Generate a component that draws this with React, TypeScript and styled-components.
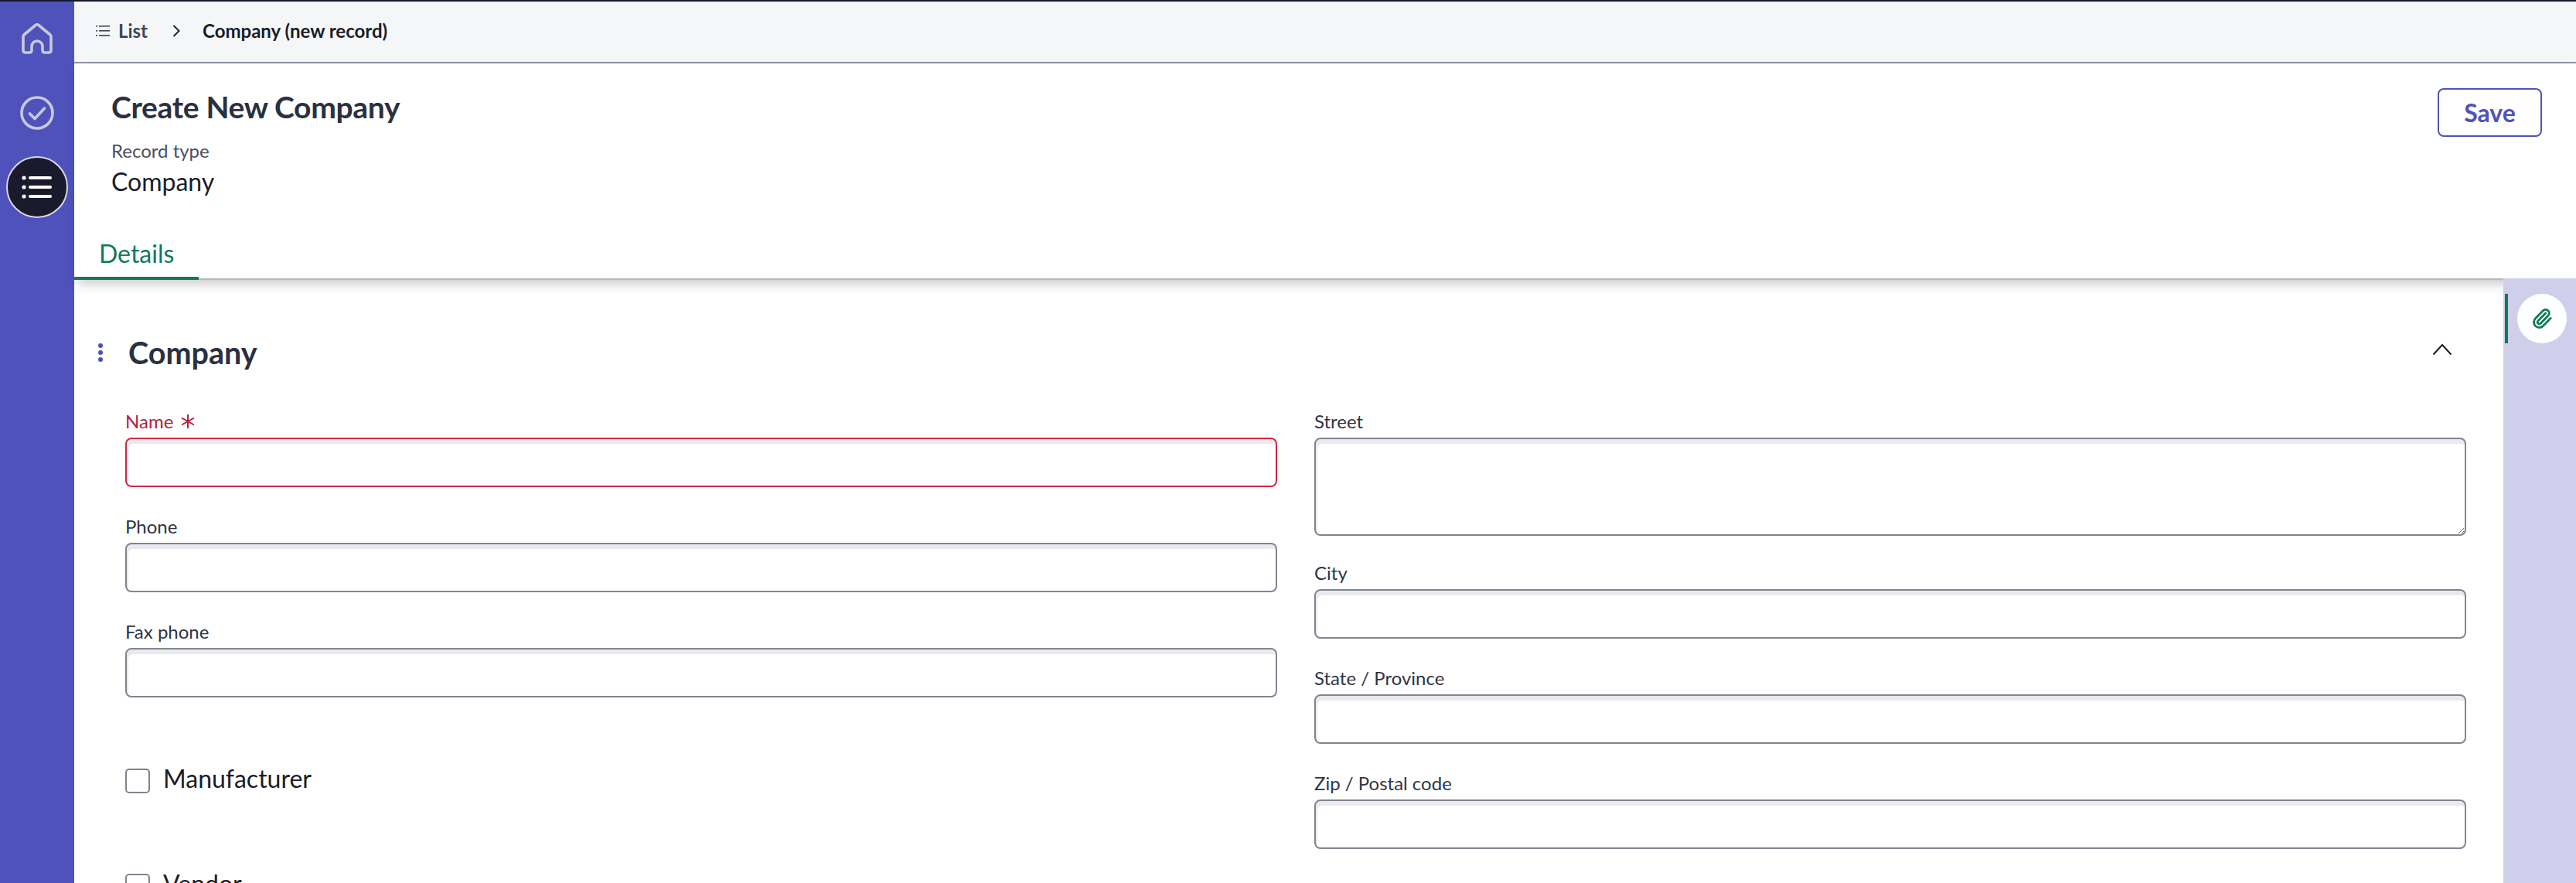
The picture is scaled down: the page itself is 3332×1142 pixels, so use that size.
import { createGlobalStyle, styled } from 'styled-components'

const GlobalStyle = createGlobalStyle`
  html, body {
    margin: 0;
    height: 100%;
    background: #fff;
  }
  body {
    font-family: Lato, "Open Sans", sans-serif;
    color: #2b3040;
    overflow: hidden;
  }
  * {
    box-sizing: border-box;
  }
`

const Page = styled.div`
  width: 3332px;
  height: 1142px;
  display: flex;
  flex-direction: column;
  overflow: hidden;
`
const TopEdge = styled.div`
  height: 2px;
  flex: none;
  background: #17172b;
`
const Shell = styled.div`
  flex: 1;
  min-height: 0;
  display: flex;
`
const Sidebar = styled.nav`
  width: 96px;
  flex: none;
  display: flex;
  flex-direction: column;
  align-items: center;
  gap: 16px;
  padding-top: 8px;
  background: #4f52bb;
`
const NavItem = styled.div<{ $active?: boolean }>`
  width: 80px;
  height: 80px;
  display: flex;
  align-items: center;
  justify-content: center;
  border-radius: 50%;
  color: #c6c9de;
  ${({ $active }) => ($active ? 'background: #1a1a2c; border: 2px solid #d6d7e9; color: #fff;' : '')}
`
const Main = styled.div`
  flex: 1;
  min-width: 0;
  display: flex;
  flex-direction: column;
`
const Breadcrumbs = styled.div`
  height: 80px;
  flex: none;
  display: flex;
  align-items: center;
  padding: 0 0 3px 28px;
  background: #f5f6f8;
  border-bottom: 2px solid #8e92a0;
  font-size: 24px;
  font-weight: 700;
`
const CrumbLink = styled.div`
  display: flex;
  align-items: center;
  gap: 11px;
  color: #3f4557;
`
const CrumbSep = styled.div`
  display: flex;
  margin: 0 29px 0 32px;
  color: #20242f;
`
const CrumbCurrent = styled.div`
  color: #1a1d27;
`
const Header = styled.header`
  position: relative;
  z-index: 1;
  flex: none;
  background: #fff;
  box-shadow: 0 8px 14px -4px rgba(40, 42, 50, 0.28);
`
const HeaderTop = styled.div`
  height: 228px;
  display: flex;
  justify-content: space-between;
  padding: 32px 44px 0 48px;
`
const Title = styled.h1`
  margin: 0;
  font-size: 39px;
  line-height: 48px;
  letter-spacing: -0.33px;
  font-weight: 700;
  color: #2b3040;
`
const MetaLabel = styled.div`
  margin-top: 17px;
  font-size: 24px;
  line-height: 32px;
  color: #4b5060;
`
const MetaValue = styled.div`
  margin-top: 4px;
  font-size: 32px;
  line-height: 40px;
  color: #1a1d27;
`
const SaveButton = styled.button`
  width: 135px;
  height: 63px;
  margin-top: 0;
  background: #fff;
  border: 2px solid #4f52bb;
  border-radius: 8px;
  color: #4f52bb;
  font-family: inherit;
  font-size: 32px;
  font-weight: 700;
`
const TabBar = styled.div`
  height: 52px;
  margin-right: 94px;
  display: flex;
  border-bottom: 2px solid #b6b8bd;
`
const Tab = styled.div`
  width: 161px;
  height: 52px;
  padding: 0 0 0 32px;
  border-bottom: 4px solid #10795a;
  font-size: 32px;
  line-height: 36px;
  color: #10795a;
`
const Body = styled.div`
  flex: 1;
  min-height: 0;
  display: flex;
`
const Content = styled.main`
  flex: 1;
  min-width: 0;
  overflow: hidden;
`
const SectionHead = styled.div`
  display: flex;
  align-items: center;
  height: 48px;
  margin-top: 70px;
  padding: 0 66px 0 0;
`
const DragDots = styled.div`
  flex: none;
  display: flex;
  align-items: center;
  justify-content: center;
  width: 68px;
  height: 48px;
  margin-right: 2px;
  color: #4f52bb;
`
const SectionTitle = styled.h2`
  flex: 1;
  margin: 0;
  font-size: 39.5px;
  line-height: 48px;
  font-weight: 700;
  color: #2b3040;
`
const Chevron = styled.div`
  display: flex;
  color: #1a1d27;
  margin-top: -8px;
`
const FormGrid = styled.div`
  display: grid;
  grid-template-columns: 1490px 1490px;
  gap: 48px;
  margin-top: 49px;
  padding: 0 48px 0 66px;
`
const Column = styled.div`
  display: flex;
  flex-direction: column;
  gap: 35px;
`
const Field = styled.label`
  display: flex;
  flex-direction: column;
`
const FieldLabel = styled.span<{ $error?: boolean }>`
  display: flex;
  align-items: center;
  gap: 9px;
  height: 32px;
  margin-bottom: 5px;
  font-size: 24px;
  line-height: 32px;
  color: ${({ $error }) => ($error ? '#b5203a' : '#2f3443')};
`
const TextInput = styled.input<{ $error?: boolean }>`
  display: block;
  width: 100%;
  height: 64px;
  padding: 0 14px;
  background: #fff;
  border: 2px solid ${({ $error }) => ($error ? '#cf2a41' : '#80848f')};
  border-radius: 8px;
  box-shadow: inset 2px 6px 0 #e9eaed;
  outline: none;
`
const TextArea = styled.textarea`
  display: block;
  width: 100%;
  height: 127px;
  margin-bottom: -3px;
  padding: 8px 14px;
  background: #fff;
  border: 2px solid #80848f;
  border-radius: 8px;
  box-shadow: inset 2px 6px 0 #e9eaed;
  outline: none;
`
const CheckRow = styled.label<{ $first?: boolean }>`
  display: flex;
  align-items: center;
  gap: 17px;
  height: 32px;
  margin-top: ${({ $first }) => ($first ? '57px' : '69px')};
  font-size: 32px;
  line-height: 32px;
  color: #1a1d27;
`
const CheckBox = styled.span`
  flex: none;
  width: 32px;
  height: 32px;
  background: #fff;
  border: 2px solid #80848f;
  border-radius: 5px;
`
const CheckText = styled.span`
  margin-bottom: 6px;
`
const Rail = styled.aside`
  position: relative;
  z-index: 2;
  width: 94px;
  flex: none;
  margin-top: -2px;
  padding: 20px 0 0 2px;
  display: flex;
  gap: 12px;
  align-items: flex-start;
  background: #cfcfeb;
`
const RailMarker = styled.div`
  width: 4px;
  height: 64px;
  background: #10795a;
`
const RailButton = styled.div`
  width: 64px;
  height: 64px;
  display: flex;
  align-items: center;
  justify-content: center;
  border-radius: 50%;
  background: #fff;
  color: #10795a;
`

const HomeIcon = () => (
  <svg width="40" height="40" viewBox="0 0 40 40" fill="none" stroke="currentColor" strokeWidth="3.6" strokeLinejoin="round">
    <path d="M3 15 L18 2.5 Q20 1 22 2.5 L37 15 Q38 16 38 18 V35 Q38 38 35 38 H30 Q27 38 27 35 V30 A7 7 0 0 0 13 30 V35 Q13 38 10 38 H5 Q2 38 2 35 V18 Q2 16 3 15 Z" />
  </svg>
)

const CheckCircleIcon = () => (
  <svg width="44" height="44" viewBox="0 0 44 44" fill="none" stroke="currentColor" strokeWidth="3.6" strokeLinecap="round" strokeLinejoin="round">
    <circle cx="22" cy="22" r="20" />
    <path d="M12.5 23 L19 29.5 L31.5 16" />
  </svg>
)

const MenuIcon = () => (
  <svg width="40" height="32" viewBox="0 0 40 32" fill="#fff">
    <circle cx="3" cy="4" r="2.6" />
    <circle cx="3" cy="16" r="2.6" />
    <circle cx="3" cy="28" r="2.6" />
    <rect x="9" y="2" width="30" height="4" rx="2" />
    <rect x="9" y="14" width="30" height="4" rx="2" />
    <rect x="9" y="26" width="30" height="4" rx="2" />
  </svg>
)

const ListIcon = () => (
  <svg width="18" height="16" viewBox="0 0 18 16" fill="currentColor">
    <rect x="0" y="1" width="2" height="1.6" />
    <rect x="0" y="7" width="2" height="1.6" />
    <rect x="0" y="13" width="2" height="1.6" />
    <rect x="4" y="1" width="14" height="1.6" />
    <rect x="4" y="7" width="14" height="1.6" />
    <rect x="4" y="13" width="14" height="1.6" />
  </svg>
)

const ChevronRight = () => (
  <svg width="10" height="16" viewBox="0 0 10 16" fill="none" stroke="currentColor" strokeWidth="2">
    <path d="M1.5 1 L8.5 8 L1.5 15" />
  </svg>
)

const ChevronUp = () => (
  <svg width="26" height="16" viewBox="0 0 26 16" fill="none" stroke="currentColor" strokeWidth="2">
    <path d="M1.5 14.5 L13 2 L24.5 14.5" />
  </svg>
)

const Dots = () => (
  <svg width="8" height="26" viewBox="0 0 8 26" fill="currentColor">
    <circle cx="4" cy="4" r="3" />
    <circle cx="4" cy="13" r="3" />
    <circle cx="4" cy="22" r="3" />
  </svg>
)

const Asterisk = () => (
  <svg width="20" height="20" viewBox="0 0 20 20" fill="none" stroke="currentColor" strokeWidth="2">
    <path d="M10 1 V19 M2 5.5 L18 14.5 M18 5.5 L2 14.5" />
  </svg>
)

const PaperclipIcon = () => (
  <svg width="28" height="28" viewBox="0 0 24 24" fill="none" stroke="currentColor" strokeWidth="2.4" strokeLinecap="round" strokeLinejoin="round">
    <path d="m16 6-8.414 8.586a2 2 0 0 0 2.829 2.829l8.414-8.586a4 4 0 1 0-5.657-5.657l-8.379 8.551a6 6 0 1 0 8.485 8.485l8.379-8.551" />
  </svg>
)

export default function App() {
  return (
    <Page>
      <GlobalStyle />
      <TopEdge />
      <Shell>
        <Sidebar>
          <NavItem>
            <HomeIcon />
          </NavItem>
          <NavItem>
            <CheckCircleIcon />
          </NavItem>
          <NavItem $active>
            <MenuIcon />
          </NavItem>
        </Sidebar>
        <Main>
          <Breadcrumbs>
            <CrumbLink>
              <ListIcon />
              List
            </CrumbLink>
            <CrumbSep>
              <ChevronRight />
            </CrumbSep>
            <CrumbCurrent>Company (new record)</CrumbCurrent>
          </Breadcrumbs>
          <Header>
            <HeaderTop>
              <div>
                <Title>Create New Company</Title>
                <MetaLabel>Record type</MetaLabel>
                <MetaValue>Company</MetaValue>
              </div>
              <SaveButton>Save</SaveButton>
            </HeaderTop>
            <TabBar>
              <Tab>Details</Tab>
            </TabBar>
          </Header>
          <Body>
            <Content>
              <SectionHead>
                <DragDots>
                  <Dots />
                </DragDots>
                <SectionTitle>Company</SectionTitle>
                <Chevron>
                  <ChevronUp />
                </Chevron>
              </SectionHead>
              <FormGrid>
                <Column>
                  <Field>
                    <FieldLabel $error>
                      Name
                      <Asterisk />
                    </FieldLabel>
                    <TextInput $error />
                  </Field>
                  <Field>
                    <FieldLabel>Phone</FieldLabel>
                    <TextInput />
                  </Field>
                  <Field>
                    <FieldLabel>Fax phone</FieldLabel>
                    <TextInput />
                  </Field>
                  <CheckRow $first>
                    <CheckBox />
                    <CheckText>Manufacturer</CheckText>
                  </CheckRow>
                  <CheckRow>
                    <CheckBox />
                    <CheckText>Vendor</CheckText>
                  </CheckRow>
                </Column>
                <Column>
                  <Field>
                    <FieldLabel>Street</FieldLabel>
                    <TextArea />
                  </Field>
                  <Field>
                    <FieldLabel>City</FieldLabel>
                    <TextInput />
                  </Field>
                  <Field>
                    <FieldLabel>State / Province</FieldLabel>
                    <TextInput />
                  </Field>
                  <Field>
                    <FieldLabel>Zip / Postal code</FieldLabel>
                    <TextInput />
                  </Field>
                </Column>
              </FormGrid>
            </Content>
            <Rail>
              <RailMarker />
              <RailButton>
                <PaperclipIcon />
              </RailButton>
            </Rail>
          </Body>
        </Main>
      </Shell>
    </Page>
  )
}
